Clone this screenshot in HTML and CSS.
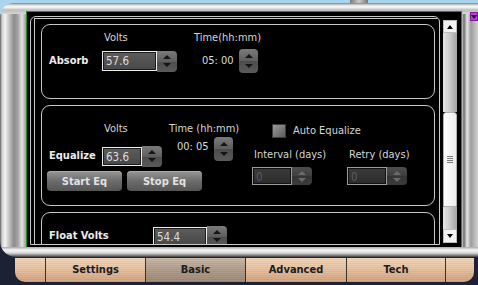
FILE: index.html
```html
<!DOCTYPE html>
<html lang="en">
<head>
    <meta charset="UTF-8">
    <title>Charger Settings</title>
    <link rel="stylesheet" href="styles.css">
</head>
<body>
    <div class="knob"></div>
    <div class="frame">
        <div class="screen">
            <div class="view">
                <div class="pane">
                    <!-- Absorb -->
                    <div class="box absorb">
                        <div class="heads">
                            <span class="gap-label"></span>
                            <span class="head-volts">Volts</span>
                            <span>Time(hh:mm)</span>
                        </div>
                        <div class="row">
                            <span class="name w53">Absorb</span>
                            <div class="field">
                                <div class="entry w55">57.6</div>
                                <div class="spin"><span class="up"></span><span class="dn"></span></div>
                            </div>
                            <span class="clock absorb-clock">05: 00</span>
                            <div class="spin solo"><span class="up"></span><span class="dn"></span></div>
                        </div>
                    </div>

                    <!-- Equalize -->
                    <div class="box equalize">
                        <div class="eq-left">
                            <div class="eq-top">
                                <div class="stack-volts">
                                    <div class="txt volts-pad">Volts</div>
                                    <div class="row eq-row">
                                        <span class="name w55">Equalize</span>
                                        <div class="field">
                                            <div class="entry w40">63.6</div>
                                            <div class="spin"><span class="up"></span><span class="dn"></span></div>
                                        </div>
                                    </div>
                                </div>
                                <div class="stack-time">
                                    <div class="txt">Time (hh:mm)</div>
                                    <div class="time-row">
                                        <span class="clock">00: 05</span>
                                        <div class="spin solo"><span class="up"></span><span class="dn"></span></div>
                                    </div>
                                </div>
                            </div>
                            <div class="eq-btns">
                                <button class="btn">Start Eq</button>
                                <button class="btn">Stop Eq</button>
                            </div>
                        </div>
                        <div class="eq-right">
                            <div class="auto">
                                <span class="check"></span>
                                <span class="txt">Auto Equalize</span>
                            </div>
                            <div class="subs">
                                <div class="sub">
                                    <div class="txt sub-label">Interval (days)</div>
                                    <div class="field off">
                                        <div class="entry w40">0</div>
                                        <div class="spin"><span class="up"></span><span class="dn"></span></div>
                                    </div>
                                </div>
                                <div class="sub">
                                    <div class="txt sub-label">Retry (days)</div>
                                    <div class="field off">
                                        <div class="entry w40">0</div>
                                        <div class="spin"><span class="up"></span><span class="dn"></span></div>
                                    </div>
                                </div>
                            </div>
                        </div>
                    </div>

                    <!-- Float -->
                    <div class="box float">
                        <div class="row float-row">
                            <span class="name w104">Float Volts</span>
                            <div class="field">
                                <div class="entry w54">54.4</div>
                                <div class="spin"><span class="up"></span><span class="dn"></span></div>
                            </div>
                        </div>
                    </div>
                </div>
            </div>

            <div class="scrollbar">
                <div class="sb-btn sb-up"></div>
                <div class="sb-track sb-top"></div>
                <div class="sb-thumb"><span></span><span></span><span></span><span></span></div>
                <div class="sb-track sb-bottom"></div>
                <div class="sb-btn sb-down"></div>
            </div>
        </div>
    </div>

    <div class="tabs">
        <div class="tab edge-left"></div>
        <div class="tab">Settings</div>
        <div class="tab active">Basic</div>
        <div class="tab wide">Advanced</div>
        <div class="tab narrow">Tech</div>
        <div class="tab edge-right"></div>
    </div>

    <div class="badge"></div>
</body>
</html>
```

FILE: styles.css
```css
body {
    margin: 0;
    width: 478px;
    height: 285px;
    overflow: hidden;
    position: relative;
    background: linear-gradient(180deg, #a9d6ee 0, #a9d6ee 140px, #1d2134 140px);
    font-family: "DejaVu Sans Condensed", "DejaVu Sans", sans-serif;
    font-stretch: condensed;
    font-size: 11px;
    line-height: 14px;
    color: #d6d6d6;
}
.knob {
    height: 3px;
    width: 18px;
    margin-left: 350px;
    background: linear-gradient(90deg, #777, #ccc, #777);
}

/* metal bezel */
.frame {
    box-sizing: border-box;
    width: 478px;
    height: 254px;
    padding: 8px 0 0 26px;
    border-radius: 14px 0 0 16px;
    background:
        linear-gradient(180deg, #7c7c7c 0, #dcdcdc 2px, #fbfbfb 4px, #bdbdbd 7px, #d6d6d6 11px) top / 100% 11px no-repeat,
        linear-gradient(0deg, #3e3e3e 0, #8e8e8e 2px, #d8d8d8 4px, #f6f6f6 7px, #a8a8a8 10px) bottom / 100% 10px no-repeat,
        linear-gradient(90deg, #5e5e5e 0, #cfcfcf 2px, #f4f4f4 5px, #c4c4c4 9px, #8c8c8c 14px, #a4a4a4 18px, #e2e2e2 22px, #9a9a9a 26px,
            #c6c6c6 calc(100% - 16px), #6e6e6e calc(100% - 14px), #e6e6e6 calc(100% - 11px), #9c9c9c calc(100% - 7px), #d4d4d4 100%);
}
.screen {
    box-sizing: border-box;
    width: 436px;
    height: 236px;
    display: flex;
    align-items: flex-start;
    background: #000;
    border: 1px solid #1f8f22;
    border-bottom: none;
}
.view {
    box-sizing: border-box;
    width: 410px;
    height: 229px;
    margin: 4px 0 0 3px;
    padding-top: 1px;
    border: 1px solid #c9c9c9;
    border-radius: 6px 6px 0 0;
    overflow: hidden;
}
.pane {
    box-sizing: border-box;
    height: 240px;
    margin-left: 3px;
    padding: 5px 0 0 6px;
    border-top: 1px solid #c9c9c9;
    border-left: 1px solid #c9c9c9;
}

/* section boxes */
.box {
    box-sizing: border-box;
    width: 394px;
    border: 1px solid #c6c6c6;
    border-radius: 9px;
    margin-bottom: 6px;
}
.absorb {
    height: 75px;
    padding: 6px 0 0 7px;
}
.equalize {
    height: 101px;
    padding: 16px 0 0 5px;
    display: flex;
}
.float {
    height: 60px;
    padding: 13px 0 0 7px;
}

.heads {
    display: flex;
    height: 14px;
}
.gap-label { width: 53px; }
.head-volts {
    margin-left: 2px;
    width: 90px;
}
.row {
    display: flex;
    align-items: center;
    height: 22px;
    margin-top: 5px;
}
.float-row {
    height: 20px;
    margin-top: 0;
}
.name {
    font-weight: bold;
    color: #ececec;
    white-space: nowrap;
}
.txt { white-space: nowrap; }
.w53 { width: 53px; }
.w55 { width: 55px; }
.w104 { width: 104px; }

/* spin fields */
.field {
    display: flex;
    align-items: center;
    flex-shrink: 0;
}
.entry {
    box-sizing: border-box;
    height: 20px;
    padding: 2px 0 0 3px;
    font-size: 11.5px;
    color: #dcdcdc;
    background: linear-gradient(180deg, #5c5c5c, #484848);
    border: 1px solid #ececec;
    box-shadow: inset 0 0 0 1px #1c1c1c;
}
.entry.w55 { width: 55px; }
.entry.w40 { width: 40px; height: 19px; }
.entry.w54 { width: 54px; height: 19px; }
.spin {
    box-sizing: border-box;
    width: 20px;
    height: 21px;
    flex-shrink: 0;
    display: flex;
    flex-direction: column;
    border-radius: 0 4px 4px 0;
    background: linear-gradient(180deg, #7a7a7a, #5e5e5e 50%, #4c4c4c 51%, #5a5a5a);
}
.spin.solo {
    width: 19px;
    height: 24px;
    border-radius: 4px;
}
.spin span {
    flex: 1;
    display: flex;
    align-items: center;
    justify-content: center;
}
.spin .up::before {
    content: "";
    border-left: 4px solid transparent;
    border-right: 4px solid transparent;
    border-bottom: 4px solid #141414;
    margin-top: 2px;
}
.spin .dn::before {
    content: "";
    border-left: 4px solid transparent;
    border-right: 4px solid transparent;
    border-top: 4px solid #141414;
    margin-bottom: 2px;
}
.clock {
    font-size: 11px;
    color: #dcdcdc;
    white-space: nowrap;
    flex-shrink: 0;
}
.absorb-clock {
    margin-left: 25px;
    width: 32px;
    margin-right: 5px;
}

/* equalize layout */
.eq-left {
    display: flex;
    flex-direction: column;
}
.eq-top {
    display: flex;
    height: 44px;
}
.stack-volts { width: 122px; }
.volts-pad { padding-left: 57px; }
.eq-row {
    height: 20px;
    margin-top: 10px;
}
.eq-row .name { padding-left: 2px; box-sizing: border-box; }
.stack-time { width: 83px; }
.time-row {
    display: flex;
    height: 24px;
    margin-top: 1px;
}
.time-row .clock {
    width: 33px;
    margin: 3px 4px 0 8px;
}
.eq-btns {
    display: flex;
    gap: 5px;
    margin-top: 5px;
}
.btn {
    width: 75px;
    height: 20px;
    padding: 0;
    border: none;
    border-radius: 4px;
    font-family: inherit;
    font-stretch: condensed;
    font-size: 11px;
    font-weight: bold;
    color: #e2e2e2;
    background: linear-gradient(180deg, #979797, #6c6c6c 50%, #555 100%);
    box-shadow: inset 0 1px 0 #aaa;
}
.eq-right {
    margin-top: 2px;
}
.auto {
    display: flex;
    align-items: center;
    height: 14px;
}
.check {
    box-sizing: border-box;
    width: 14px;
    height: 14px;
    margin: 0 7px 0 20px;
    border: 1px solid #3c3c3c;
    background: linear-gradient(135deg, #9a9a9a, #5c5c5c);
}
.subs {
    display: flex;
    margin-top: 10px;
}
.sub { width: 95px; }
.sub-label {
    padding-left: 2px;
    margin-bottom: 5px;
}
.field.off .entry {
    height: 18px;
    color: #5e5e5e;
    border-color: #9c9c9c;
    background: linear-gradient(180deg, #3a3a3a, #2c2c2c);
    box-shadow: inset 0 0 0 1px #111;
}
.field.off .spin {
    height: 18px;
    background: linear-gradient(180deg, #4e4e4e, #3e3e3e 50%, #343434 51%, #3c3c3c);
}
.field.off .spin .up::before { border-bottom-color: #6a6a6a; }
.field.off .spin .dn::before { border-top-color: #6a6a6a; }

/* scrollbar */
.scrollbar {
    width: 14px;
    height: 223px;
    margin: 8px 0 0 3px;
    display: flex;
    flex-direction: column;
}
.sb-btn {
    box-sizing: border-box;
    height: 13px;
    display: flex;
    align-items: center;
    justify-content: center;
    background: #f2f2f2;
    border: 1px solid #bdbdbd;
}
.sb-down { height: 14px; }
.sb-up::before {
    content: "";
    border-left: 3px solid transparent;
    border-right: 3px solid transparent;
    border-bottom: 4px solid #000;
}
.sb-down::before {
    content: "";
    border-left: 3px solid transparent;
    border-right: 3px solid transparent;
    border-top: 4px solid #000;
}
.sb-track {
    background: linear-gradient(90deg, #e4e4e4, #cfcfcf 40%, #a2a2a2);
}
.sb-top { height: 79px; }
.sb-bottom { height: 22px; }
.sb-thumb {
    box-sizing: border-box;
    height: 95px;
    display: flex;
    flex-direction: column;
    align-items: center;
    justify-content: center;
    gap: 1px;
    border: 1px solid #b0b0b0;
    border-radius: 3px 3px 0 0;
    background: linear-gradient(90deg, #fdfdfd, #ececec);
}
.sb-thumb span {
    width: 6px;
    height: 1px;
    background: #7a7a7a;
}

/* bottom tabs */
.tabs {
    display: flex;
    width: 459px;
    height: 24px;
    margin: 1px 0 0 15px;
    border-radius: 0 0 10px 10px;
    overflow: hidden;
}
.tab {
    box-sizing: border-box;
    width: 100px;
    display: flex;
    align-items: center;
    justify-content: center;
    font-weight: bold;
    color: #1b1b1b;
    border-left: 1px solid #3a3028;
    background:
        repeating-linear-gradient(180deg, rgba(255, 255, 255, 0.08) 0 1px, rgba(0, 0, 0, 0.03) 1px 2px),
        linear-gradient(180deg, #f1d3b6, #e6bf9c 45%, #d09e78);
}
.tab.active {
    background:
        repeating-linear-gradient(180deg, rgba(255, 255, 255, 0.06) 0 1px, rgba(0, 0, 0, 0.03) 1px 2px),
        linear-gradient(180deg, #c7b6a4, #b09c8a 45%, #9c8674);
}
.edge-left {
    width: 30px;
    border-left: none;
}
.wide { width: 101px; }
.narrow { width: 99px; }
.edge-right { width: 29px; }

.badge {
    position: absolute;
    left: 470px;
    top: 12px;
    width: 8px;
    height: 9px;
    box-sizing: border-box;
    border: 1px solid #7a1a8c;
    background: #c23ce0;
    display: flex;
    justify-content: center;
    align-items: center;
}
.badge::before {
    content: "";
    border-left: 3px solid transparent;
    border-right: 3px solid transparent;
    border-top: 4px solid #1a0a20;
}
```
